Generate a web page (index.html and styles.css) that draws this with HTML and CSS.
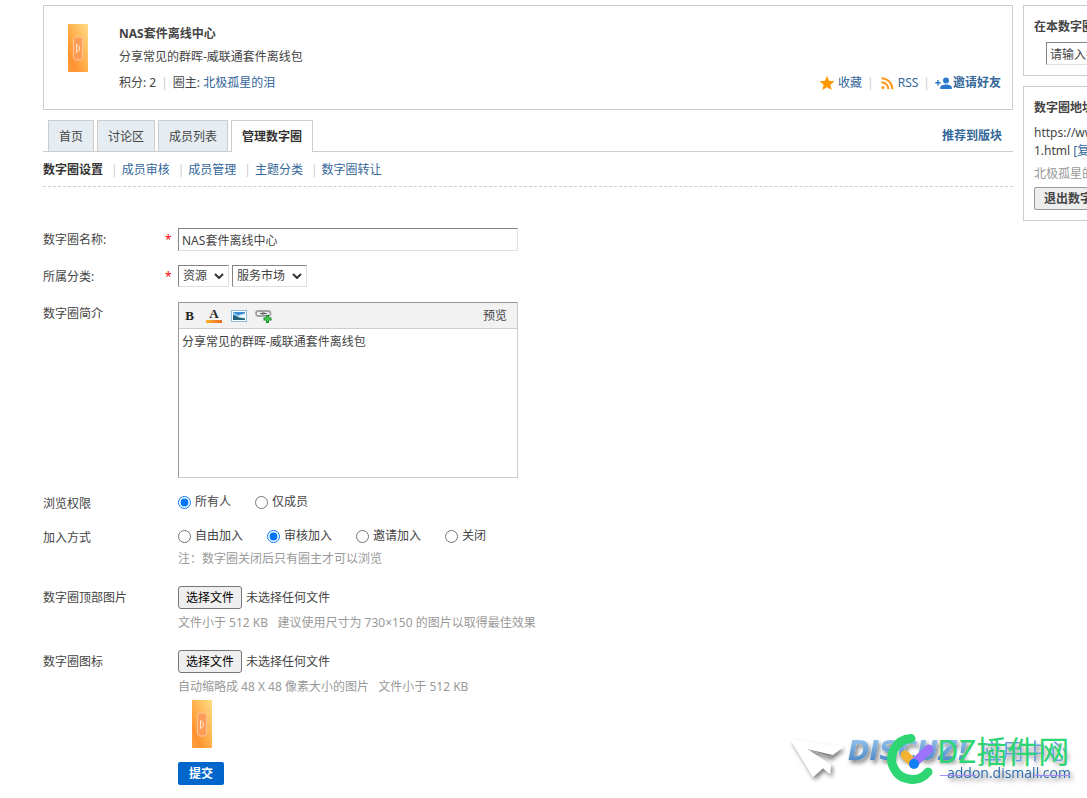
FILE: index.html
```
<!DOCTYPE html>
<html lang="zh-CN">
<head>
<meta charset="utf-8">
<title>NAS套件离线中心</title>
<link rel="stylesheet" href="styles.css">
</head>
<body>
<svg class="defs" aria-hidden="true">
  <defs>
    <linearGradient id="orange" x1="1" y1="0" x2="0" y2="1">
      <stop offset="0" stop-color="#ffdc86"/><stop offset=".5" stop-color="#ffb04c"/><stop offset=".78" stop-color="#ff9230"/><stop offset="1" stop-color="#ffa043"/>
    </linearGradient>
    <symbol id="group-icon" viewBox="0 0 20 48">
      <rect width="20" height="48" fill="url(#orange)"/>
      <rect x="5.500" y="13" width="9" height="23" rx="2.500" fill="#ff9c55" stroke="#ffc49a"/>
      <path d="M8.500 20.500v8l3-2.500v-3z" fill="#ffa45c" stroke="#ffe2cb" stroke-width="1"/>
    </symbol>
  </defs>
</svg>
<div class="page">
  <main class="main">
    <header class="intro">
      <svg class="group-icon"><use href="#group-icon"/></svg>
      <div class="intro-text">
        <h1>NAS套件离线中心</h1>
        <p class="intro-desc">分享常见的群晖-威联通套件离线包</p>
        <div class="intro-meta">
          <span>积分: 2<i class="pipe">|</i>圈主: <a href="#">北极孤星的泪</a></span>
          <span class="actions">
            <a href="#"><svg width="16" height="16" viewBox="0 0 16 16"><path d="M8 .8l2.100 4.900 5.300.5-4 3.500 1.200 5.300L8 12.200 3.400 15l1.200-5.300-4-3.500 5.300-.5z" fill="#ff9900"/></svg>收藏</a><i class="pipe">|</i>
            <a href="#"><svg width="16" height="16" viewBox="0 0 16 16"><circle cx="4" cy="12.500" r="1.600" fill="#ff9a1f"/><path d="M2.400 7.200a7 7 0 0 1 7 7M2.400 3.200a11 11 0 0 1 11 11" fill="none" stroke="#ff9a1f" stroke-width="2"/></svg>RSS</a><i class="pipe">|</i>
            <a href="#" class="strong"><svg width="17" height="16" viewBox="0 0 17 16"><path d="M3 5v5.400M.3 7.700h5.400" stroke="#2b78cc" stroke-width="1.400"/><circle cx="11" cy="5.500" r="3" fill="#2b78cc"/><path d="M5.200 14v-1.500c0-2 3-3 5.800-3s5.800 1 5.800 3V14z" fill="#2b78cc"/></svg>邀请好友</a>
          </span>
        </div>
      </div>
    </header>

    <nav class="tabs">
      <a href="#">首页</a><a href="#">讨论区</a><a href="#">成员列表</a><a href="#" class="active">管理数字圈</a>
      <a href="#" class="recommend">推荐到版块</a>
    </nav>
    <nav class="subnav">
      <a href="#" class="current">数字圈设置</a><a href="#">成员审核</a><a href="#">成员管理</a><a href="#">主题分类</a><a href="#">数字圈转让</a>
    </nav>

    <form class="form">
      <div class="row">
        <label for="name">数字圈名称:</label><span class="req">*</span>
        <div><input id="name" class="text" type="text" value="NAS套件离线中心"></div>
      </div>
      <div class="row cat-row">
        <label for="cat">所属分类:</label><span class="req">*</span>
        <div class="selects">
          <span class="select"><select id="cat"><option>资源</option></select><svg viewBox="0 0 10 6"><path d="M1 1l4 4 4-4"/></svg></span>
          <span class="select"><select class="wide" aria-label="子分类"><option>服务市场</option></select><svg viewBox="0 0 10 6"><path d="M1 1l4 4 4-4"/></svg></span>
        </div>
      </div>
      <div class="row">
        <label for="desc">数字圈简介</label><span></span>
        <div class="editor">
          <div class="toolbar">
            <button type="button" class="bold" aria-label="粗体">B</button>
            <button type="button" class="color" aria-label="颜色">A</button>
            <button type="button" aria-label="图片"><svg width="16" height="12" viewBox="0 0 16 12"><rect x=".5" y=".5" width="15" height="11" fill="#fff" stroke="#8fbcdc"/><rect x="2" y="2" width="12" height="8" fill="#8cc8f0"/><path d="M2 2h12v1L7 5z" fill="#3a8ad0"/><path d="M6 7l4-2 4-1v4z" fill="#eef8fc"/><path d="M2 5c3 0 4 3 12 3.500V10H2z" fill="#246478"/></svg></button>
            <button type="button" aria-label="链接"><svg width="17" height="14" viewBox="0 0 17 14"><rect x="1" y="2" width="8" height="5" rx="2.500" fill="none" stroke="#a2a2a2" stroke-width="1.800"/><rect x="7.500" y="2" width="8" height="5" rx="2.500" fill="none" stroke="#a2a2a2" stroke-width="1.800"/><path d="M5 4.500h7" stroke="#666"/><path d="M12.500 6v8M8.500 10h8" stroke="#14832a" stroke-width="3"/><path d="M12.500 7v6M9.500 10h6" stroke="#45d34d" stroke-width="1.500"/></svg></button>
            <button type="button" class="preview">预览</button>
          </div>
          <textarea id="desc">分享常见的群晖-威联通套件离线包</textarea>
        </div>
      </div>
      <div class="row short" role="radiogroup" aria-label="浏览权限">
        <span class="name">浏览权限</span><span></span>
        <div class="radios">
          <label><input type="radio" name="view" checked>所有人</label>
          <label><input type="radio" name="view">仅成员</label>
        </div>
      </div>
      <div class="row" role="radiogroup" aria-label="加入方式">
        <span class="name">加入方式</span><span></span>
        <div>
          <div class="radios">
            <label><input type="radio" name="join">自由加入</label>
            <label><input type="radio" name="join" checked>审核加入</label>
            <label><input type="radio" name="join">邀请加入</label>
            <label><input type="radio" name="join">关闭</label>
          </div>
          <p class="note">注：数字圈关闭后只有圈主才可以浏览</p>
        </div>
      </div>
      <div class="row file-row">
        <label for="banner">数字圈顶部图片</label><span></span>
        <div>
          <div class="file"><input id="banner" type="file" hidden><button type="button">选择文件</button><span>未选择任何文件</span></div>
          <p class="note">文件小于 512 KB &nbsp; 建议使用尺寸为 730×150 的图片以取得最佳效果</p>
        </div>
      </div>
      <div class="row">
        <label for="icon">数字圈图标</label><span></span>
        <div>
          <div class="file"><input id="icon" type="file" hidden><button type="button">选择文件</button><span>未选择任何文件</span></div>
          <p class="note">自动缩略成 48 X 48 像素大小的图片 &nbsp; 文件小于 512 KB</p>
          <svg class="group-icon"><use href="#group-icon"/></svg>
        </div>
      </div>
      <div class="row"><span></span><span></span><div><button type="submit" class="submit">提交</button></div></div>
    </form>
  </main>

  <aside class="side">
    <section class="box search">
      <h2><label for="q">在本数字圈内搜索</label></h2>
      <input id="q" class="text" type="text" value="请输入搜索内容">
    </section>
    <section class="box">
      <h2>数字圈地址</h2>
      <p class="address">https://www.dismall.com/group-<br>1.html <a href="#">[复制]</a></p>
      <p class="owner">北极孤星的泪</p>
      <button type="button" class="quit">退出数字圈</button>
    </section>
  </aside>
</div>

<svg class="watermark" width="297" height="70" viewBox="0 0 297 70">
  <defs>
    <filter id="soft" x="-10%" y="-20%" width="125%" height="160%"><feDropShadow dx="2" dy="3" stdDeviation="2" flood-color="#000" flood-opacity=".5"/></filter>
    <linearGradient id="blue" x1="0" y1="0" x2="0" y2="1"><stop offset="0" stop-color="#9cc8f2"/><stop offset="1" stop-color="#3f7cbd"/></linearGradient>
  </defs>
  <g filter="url(#soft)">
    <path d="M0 10l53 8-13 10-23-8 24 16-1 9-7-6-10 9z" fill="#fff"/>
    <path d="M17 20l23 8 3-2z" fill="#888"/>
    <text class="wm-brand" x="58" y="31">DISCUZ!</text>
    <text class="wm-center" x="190" y="30">应用中心</text>
    <text class="wm-domain" x="157" y="49">addon.dismall.com</text>
  </g>
  <path d="M150 46.500h36M244 46.500h36" stroke="#a58bf5"/>
  <path d="M121 9.500A20.500 20.500 0 1 0 138 43" fill="none" stroke="#2ed573" stroke-width="9" stroke-linecap="round"/>
  <path d="M115 26l8 8" stroke="#f5b335" stroke-width="9" stroke-linecap="round"/>
  <path d="M124 34l15-14" stroke="#9b72fb" stroke-width="9" stroke-linecap="round"/>
  <circle cx="124" cy="35" r="5" fill="#137ff5"/>
  <text class="wm-site" x="147" y="34">DZ插件网</text>
</svg>
</body>
</html>
```
FILE: styles.css
```
* { box-sizing: border-box; }
body {
  margin: 0;
  position: relative;
  min-height: 100vh;
  overflow-x: clip;
  background: #fff;
  color: #444;
  font: 12px/18px "Noto Sans", "Noto Sans CJK SC", sans-serif;
}
h1, h2, p { margin: 0; font-size: 12px; }
a { color: #336699; text-decoration: none; }
input, select, textarea, button { font: inherit; color: inherit; margin: 0; }
.defs { position: absolute; width: 0; height: 0; }

.page {
  display: grid;
  grid-template-columns: minmax(0, 1fr) 240px;
  gap: 10px;
  align-items: start;
  margin: 0 -176px 0 43px;
  padding-top: 5px;
}
.group-icon { display: block; width: 20px; height: 48px; }

.intro {
  display: flex;
  gap: 31px;
  height: 105px;
  padding: 18px 11px 0 24px;
  border: 1px solid #cdcdcd;
}
.intro-text { flex: 1; padding-top: 1px; }
.intro-desc { margin-top: 5px; }
.intro-meta { display: flex; justify-content: space-between; margin-top: 8px; }
.actions { display: flex; }
.actions a { display: flex; align-items: center; gap: 3px; }
.actions .strong { font-weight: bold; gap: 1px; }
.pipe { margin: 0 5px; color: #ccc; font-style: normal; }

.tabs {
  display: flex;
  gap: 3px;
  margin-top: 10px;
  padding: 0 11px 0 5px;
  border-bottom: 1px solid #cdcdcd;
}
.tabs a {
  height: 31px;
  padding: 0 10px;
  border: 1px solid #cdcdcd;
  border-bottom: 0;
  background: #e5edf2;
  color: #444;
  line-height: 32px;
}
.tabs .active { height: 32px; margin-bottom: -1px; background: #fff; font-weight: bold; color: #333; }
.tabs .recommend {
  margin-left: auto;
  padding: 0;
  border: 0;
  background: none;
  color: #336699;
  font-weight: bold;
}
.subnav { display: flex; padding: 9px 0 7px; border-bottom: 1px dashed #cdcdcd; }
.subnav a + a::before { content: "|"; margin: 0 4px 0 8px; color: #ccc; }
.subnav .current { color: #333; font-weight: bold; }

.form { padding-top: 41px; }
.row {
  display: grid;
  grid-template-columns: 122px 13px minmax(0, 1fr);
  align-items: start;
  margin-bottom: 14px;
}
.row > label, .row > .name, .req { padding-top: 3px; }
.req { color: #f00; }
.cat-row { margin-bottom: 15px; }
.text {
  display: block;
  width: 340px;
  height: 23px;
  padding: 0 3px;
  border: 1px solid;
  border-color: #848484 #e0e0e0 #e0e0e0 #848484;
  background: #fff;
}
.selects { display: flex; gap: 3px; }
.select { position: relative; }
.select select {
  display: block;
  width: 51px;
  height: 22px;
  padding: 0 4px;
  appearance: none;
  border: 1px solid;
  border-color: #848484 #e0e0e0 #e0e0e0 #848484;
  border-radius: 0;
  background: #fff;
}
.select .wide { width: 75px; }
.select svg {
  position: absolute;
  right: 5px;
  top: 8px;
  width: 10px;
  height: 6px;
  fill: none;
  stroke: #333;
  stroke-width: 2;
  pointer-events: none;
}
.editor {
  width: 340px;
  border: 1px solid;
  border-color: #999 #ccc #ccc #999;
}
.toolbar {
  display: flex;
  align-items: center;
  gap: 8px;
  height: 26px;
  padding: 0 10px 0 2px;
  border-bottom: 1px solid #cdcdcd;
  background: #f2f2f2;
}
.toolbar button {
  display: flex;
  align-items: center;
  justify-content: center;
  width: 17px;
  padding: 0;
  border: 0;
  background: none;
}
.toolbar .bold, .toolbar .color { font: bold 13px/12px "Liberation Serif", serif; color: #222; }
.toolbar .color { width: 16px; border-bottom: 3px solid #f08a20; border-image: linear-gradient(90deg, #fdc52f, #e8561c) 3; }
.toolbar .preview { width: auto; margin-left: auto; }
.editor textarea {
  display: block;
  width: 100%;
  height: 148px;
  padding: 4px 3px;
  border: 0;
  outline: 0;
  resize: none;
}
.short { margin-bottom: 13px; }
.radios { display: flex; gap: 24px; padding-top: 1px; }
.radios label { display: flex; align-items: center; gap: 4px; }
.radios input { width: 13px; height: 13px; accent-color: #0075ff; }
.note { margin-top: 5px; color: #999; }
.file-row { margin-top: 18px; margin-bottom: 18px; }
.file { display: flex; align-items: center; gap: 4px; }
.file button {
  width: 64px;
  height: 23px;
  padding: 0;
  border: 1px solid #767676;
  border-radius: 3px;
  background: #efefef;
  color: #000;
}
.row .group-icon { margin: 4px 0 0 14px; }
.submit {
  display: block;
  width: 46px;
  height: 23px;
  padding: 0;
  border: 0;
  border-radius: 2px;
  background: #0066cc;
  color: #fff;
  font-weight: bold;
}

.box { margin-bottom: 10px; padding: 12px 10px 10px; border: 1px solid #cdcdcd; }
.search .text { width: 180px; margin: 6px 0 0 12px; }
.address { margin-top: 7px; }
.owner { margin: 5px 0 4px; color: #999; }
.quit {
  display: block;
  width: 80px;
  height: 23px;
  padding: 0;
  border: 1px solid #999;
  border-radius: 2px;
  background: #eee;
  font-weight: bold;
}

.watermark { position: absolute; right: 0; bottom: 0; overflow: visible; }
.wm-brand { font: italic bold 26px "DejaVu Sans", sans-serif; fill: url(#blue); }
.wm-center { font: 22px "Noto Sans CJK SC", sans-serif; fill: #6b9ed8; }
.wm-domain { font: 14px "Open Sans", sans-serif; fill: #2f6bab; }
.wm-site { font: 31px "Noto Sans CJK SC", sans-serif; fill: #2ed573; }
```
